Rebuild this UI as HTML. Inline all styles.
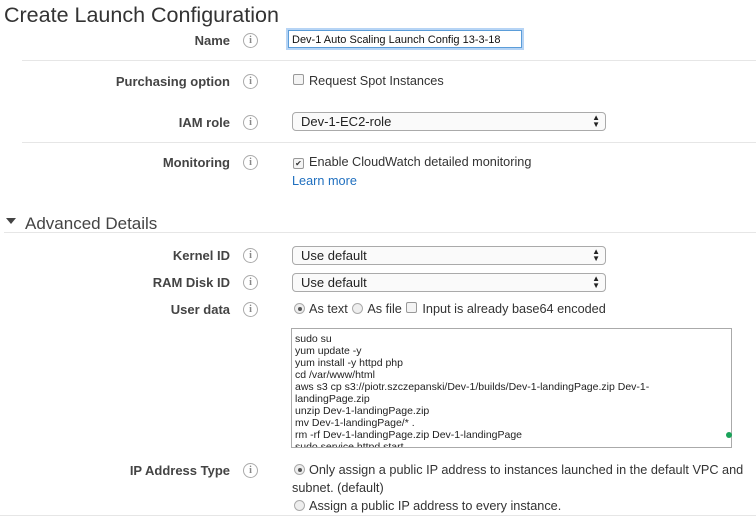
<!DOCTYPE html>
<html><head><style>
body{margin:0;width:756px;height:520px;background:#fff;font-family:"Liberation Sans",sans-serif;color:#444;position:relative;overflow:hidden}
.a{position:absolute;white-space:nowrap}
.lbl{position:absolute;right:526px;font-weight:bold;font-size:13px;color:#444;white-space:nowrap}
.i{position:absolute;left:243px;width:13px;height:13px;border:1px solid #aaa;border-radius:50%;font:bold 10px "Liberation Serif",serif;color:#888;text-align:center;line-height:13px}
.hr{position:absolute;height:1px;background:#e6e6e6}
.t{position:absolute;font-size:12.7px;color:#333;white-space:nowrap}
.sel{position:absolute;left:292px;width:312px;height:17px;border:1px solid #aaa;border-radius:4px;background:#fafafa;font-size:13px;color:#222;line-height:17px;padding-left:0}
.sel span{position:absolute;left:8px;top:0}
.sel b{position:absolute;right:5px;top:1px;font-size:8px;line-height:7px;color:#222}
.cb{display:inline-block;width:9px;height:9px;border:1px solid #999;border-radius:2px;background:#f4f4f4;vertical-align:0px;margin-right:5px;position:relative}
.rb{display:inline-block;width:9px;height:9px;border:1px solid #aaa;border-radius:50%;background:#eee;vertical-align:-1px;margin-right:4px;position:relative}
.rb.on::after{content:"";position:absolute;left:2.5px;top:2.5px;width:4px;height:4px;border-radius:50%;background:#555}
</style></head><body>
<div class="a" style="left:4px;top:3px;font-size:21.5px;color:#333">Create Launch Configuration</div>

<div class="lbl" style="top:33px">Name</div><div class="i" style="top:33px">i</div>
<div class="a" style="left:288px;top:30px;height:18px;border:1px solid #5b9dd9;box-shadow:0 0 0 2px #b6d4f5;font-size:11px;line-height:18px;color:#111;padding-left:3px;box-sizing:border-box;width:234px">Dev-1 Auto Scaling Launch Config 13-3-18</div>
<div class="hr" style="left:22px;top:60px;width:734px"></div>

<div class="lbl" style="top:74px">Purchasing option</div><div class="i" style="top:74px">i</div>
<div class="t" style="left:293px;top:74px"><span class="cb"></span>Request Spot Instances</div>

<div class="lbl" style="top:115px">IAM role</div><div class="i" style="top:115px">i</div>
<div class="sel" style="top:112px"><span>Dev-1-EC2-role</span><b>▲<br>▼</b></div>
<div class="hr" style="left:22px;top:142px;width:734px"></div>

<div class="lbl" style="top:155px">Monitoring</div><div class="i" style="top:155px">i</div>
<div class="t" style="left:293px;top:155px"><span class="cb" style="font-size:8px;line-height:9px;text-align:center;vertical-align:0">✔</span>Enable CloudWatch detailed monitoring</div>
<div class="t" style="left:292px;top:174px;color:#1f6fbf">Learn more</div>

<div class="a" style="left:6px;top:218px;width:0;height:0;border-left:5px solid transparent;border-right:5px solid transparent;border-top:6px solid #444"></div>
<div class="a" style="left:25px;top:214px;font-size:17px;color:#444">Advanced Details</div>
<div class="hr" style="left:4px;top:232px;width:752px"></div>

<div class="lbl" style="top:248px">Kernel ID</div><div class="i" style="top:248px">i</div>
<div class="sel" style="top:246px"><span>Use default</span><b>▲<br>▼</b></div>
<div class="lbl" style="top:275px">RAM Disk ID</div><div class="i" style="top:275px">i</div>
<div class="sel" style="top:273px"><span>Use default</span><b>▲<br>▼</b></div>

<div class="lbl" style="top:302px">User data</div><div class="i" style="top:302px">i</div>
<div class="t" style="left:294px;top:302px"><span class="rb on"></span>As text <span class="rb" style="margin-left:1px"></span>As file <span class="cb" style="margin-left:1px"></span>Input is already base64 encoded</div>

<div class="a" style="left:291px;top:328px;border:1px solid #aaa;overflow:hidden;font-size:10.5px;line-height:12px;color:#222;padding:4px 0 0 3px;box-sizing:border-box;width:441px;height:120px;white-space:pre">sudo su
yum update -y
yum install -y httpd php
cd /var/www/html
aws s3 cp s3://piotr.szczepanski/Dev-1/builds/Dev-1-landingPage.zip Dev-1-
landingPage.zip
unzip Dev-1-landingPage.zip
mv Dev-1-landingPage/* .
rm -rf Dev-1-landingPage.zip Dev-1-landingPage
sudo service httpd start</div>
<div class="a" style="left:726px;top:432px;width:6px;height:6px;border-radius:50%;background:#1aa35a"></div>

<div class="lbl" style="top:463px">IP Address Type</div><div class="i" style="top:463px">i</div>
<div class="t" style="left:294px;top:463px"><span class="rb on"></span>Only assign a public IP address to instances launched in the default VPC and</div>
<div class="t" style="left:292px;top:481px">subnet. (default)</div>
<div class="t" style="left:294px;top:499px"><span class="rb"></span>Assign a public IP address to every instance.</div>
<div class="hr" style="left:0;top:515px;width:756px"></div>
</body></html>
